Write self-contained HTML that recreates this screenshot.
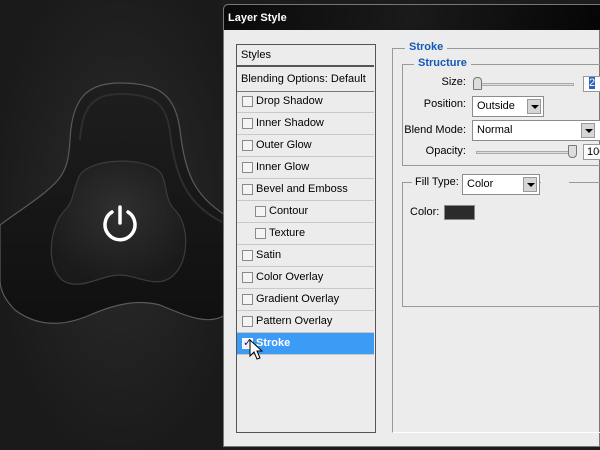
<!DOCTYPE html>
<html><head><style>
*{margin:0;padding:0;box-sizing:border-box}
body{width:600px;height:450px;overflow:hidden;background:#1c1c1c;font-family:"Liberation Sans","DejaVu Sans",sans-serif;font-size:11px;color:#000;position:relative}
.a{position:absolute;white-space:nowrap}
.row{position:absolute;left:237px;width:137px;height:22px;border-bottom:1px solid #c8c8c8;line-height:21px;padding-left:19px;white-space:nowrap}
.cb{position:absolute;left:5px;top:5px;width:11px;height:11px;border:1px solid #8a8a8a;background:#f4f4f4}
.sub{padding-left:32px}.sub .cb{left:18px}
.lbl{position:absolute;text-align:right;white-space:nowrap}
.sel{position:absolute;background:#fff;border:1px solid #8c8c8c;height:21px;line-height:19px;padding-left:4px;white-space:nowrap}
.dd{position:absolute;right:2px;top:2px;width:14px;height:15px;background:#d6d6d6;border:1px solid #999}
.dd:after{content:"";position:absolute;left:3px;top:5px;border:4px solid transparent;border-top:4px solid #000}
.blue{color:#1458b8;font-weight:bold;background:#ececec;padding:0 4px}
</style></head><body>
<div class="a" style="left:0;top:0;width:223px;height:450px;background:radial-gradient(ellipse at 120px 210px,#2c2c2c,#1a1a1a 75%)"></div>
<svg class="a" style="left:0;top:0" width="230" height="450">
<defs><linearGradient id="g" x1="0" y1="0" x2="0" y2="1"><stop offset="0" stop-color="#1e1e1e"/><stop offset="1" stop-color="#101010"/></linearGradient>
<radialGradient id="r" cx="0.5" cy="0.4" r="0.6"><stop offset="0" stop-color="#303030"/><stop offset="1" stop-color="#1a1a1a"/></radialGradient></defs>
<path d="M70,140 C72,95 90,83 120,83 C160,83 175,95 180,130 C185,175 195,195 225,215 L225,315 C210,325 190,318 160,305 C140,300 120,302 90,315 C60,328 35,325 15,310 C5,300 0,290 0,280 L0,225 C20,210 45,195 58,180 C68,168 69,155 70,140 Z" fill="url(#g)" stroke="#5a5a5a" stroke-width="1.2"/>
<path d="M80,140 C82,104 96,94 120,94 C155,94 166,104 170,132 C175,178 188,205 222,222" fill="none" stroke="#2e2e2e" stroke-width="2"/>
<path d="M80,175 C90,158 150,155 162,175 C168,190 165,200 175,210 C190,225 190,265 170,278 C155,288 135,275 120,275 C100,275 80,292 62,280 C45,265 50,225 65,210 C75,200 72,190 80,175 Z" fill="url(#r)" stroke="#3c3c3c" stroke-width="1.2"/>
<path d="M112,212 A15,15 0 1 0 128,212" fill="none" stroke="#fff" stroke-width="3.5" stroke-linecap="round"/>
<line x1="120" y1="207" x2="120" y2="223" stroke="#fff" stroke-width="3.5" stroke-linecap="round"/>
</svg>
<div class="a" style="left:223px;top:4px;width:377px;height:443px;background:#ececec;border:1px solid #777;border-radius:5px 0 0 0"></div>
<div class="a" style="left:224px;top:5px;width:376px;height:25px;background:linear-gradient(100deg,#0a0a0a,#1a1a1a 50%,#050505);border-radius:4px 0 0 0;color:#fff;font-weight:bold;font-size:11px;line-height:26px;padding-left:4px">Layer Style</div>
<div class="a" style="left:236px;top:44px;width:140px;height:389px;border:1px solid #555;background:#ececec"></div>
<div class="row" style="top:45px;padding-left:4px;border-bottom:2px solid #555">Styles</div>
<div class="row" style="top:69px;padding-left:4px;height:23px;border-bottom:1px solid #777">Blending Options: Default</div>
<div class="row" style="top:91px"><i class="cb"></i>Drop Shadow</div>
<div class="row" style="top:113px"><i class="cb"></i>Inner Shadow</div>
<div class="row" style="top:135px"><i class="cb"></i>Outer Glow</div>
<div class="row" style="top:157px"><i class="cb"></i>Inner Glow</div>
<div class="row" style="top:179px"><i class="cb"></i>Bevel and Emboss</div>
<div class="row sub" style="top:201px"><i class="cb"></i>Contour</div>
<div class="row sub" style="top:223px"><i class="cb"></i>Texture</div>
<div class="row" style="top:245px"><i class="cb"></i>Satin</div>
<div class="row" style="top:267px"><i class="cb"></i>Color Overlay</div>
<div class="row" style="top:289px"><i class="cb"></i>Gradient Overlay</div>
<div class="row" style="top:311px"><i class="cb"></i>Pattern Overlay</div>
<div class="row" style="top:333px;background:#3b9bf5;color:#fff;font-weight:bold"><i class="cb" style="border-color:#fff;color:#12208a;font-size:11px;line-height:9px;font-weight:bold">✓</i>Stroke</div>
<svg class="a" style="left:249px;top:339px" width="14" height="22"><path d="M1,1 L1,17 L5,13 L8,20 L11,19 L8,12 L13,12 Z" fill="#fff" stroke="#000" stroke-width="1"/></svg>
<div class="a" style="left:392px;top:48px;width:210px;height:385px;border:1px solid #999;border-right:none;border-bottom-color:#fff"></div>
<div class="a blue" style="left:405px;top:41px">Stroke</div>
<div class="a" style="left:402px;top:64px;width:200px;height:102px;border:1px solid #999;border-right:none"></div>
<div class="a blue" style="left:414px;top:57px">Structure</div>
<div class="lbl" style="left:420px;top:76px;width:46px">Size:</div>
<div class="a" style="left:476px;top:83px;width:98px;height:3px;border:1px solid #aaa;background:#ddd"></div>
<div class="a" style="left:473px;top:77px;width:9px;height:13px;background:#ddd;border:1px solid #777;border-radius:4px 4px 1px 1px"></div>
<div class="a" style="left:583px;top:76px;width:20px;height:16px;background:#fff;border:1px solid #999"><span style="background:#3060c0;color:#fff;margin-left:5px">2</span></div>
<div class="lbl" style="left:410px;top:98px;width:56px">Position:</div>
<div class="sel" style="left:472px;top:96px;width:72px">Outside<i class="dd"></i></div>
<div class="lbl" style="left:400px;top:124px;width:66px">Blend Mode:</div>
<div class="sel" style="left:472px;top:120px;width:130px">Normal<i class="dd" style="right:6px"></i></div>
<div class="lbl" style="left:410px;top:145px;width:56px">Opacity:</div>
<div class="a" style="left:476px;top:151px;width:98px;height:3px;border:1px solid #aaa;background:#ddd"></div>
<div class="a" style="left:568px;top:145px;width:9px;height:13px;background:#ddd;border:1px solid #777;border-radius:1px 1px 4px 4px"></div>
<div class="a" style="left:583px;top:144px;width:20px;height:16px;background:#fff;border:1px solid #999;padding-left:3px;line-height:14px">100</div>
<div class="a" style="left:402px;top:182px;width:200px;height:125px;border:1px solid #999;border-right:none"></div>
<div class="a" style="left:412px;top:176px;background:#ececec;padding:0 3px">Fill Type:</div>
<div class="sel" style="left:462px;top:174px;width:78px;background:#fff">Color<i class="dd"></i></div>
<div class="a" style="left:541px;top:176px;width:28px;height:10px;background:#ececec"></div>
<div class="a" style="left:410px;top:206px">Color:</div>
<div class="a" style="left:444px;top:205px;width:31px;height:15px;background:#2b2b2b;border:1px solid #888"></div>
</body></html>
